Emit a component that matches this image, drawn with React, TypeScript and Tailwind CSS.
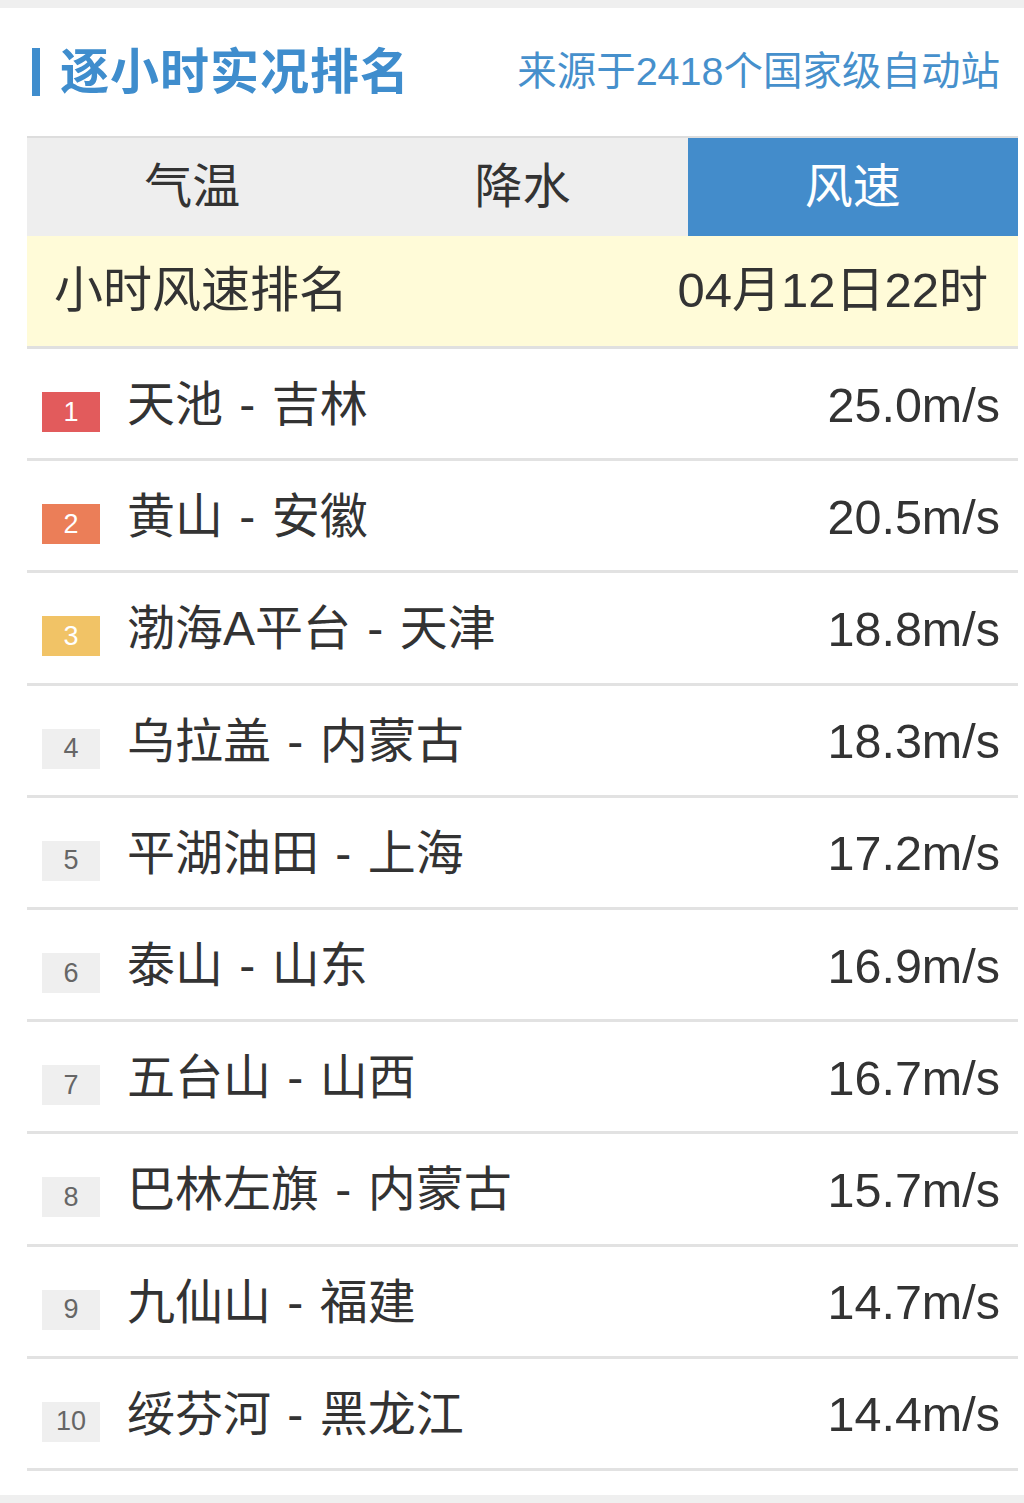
const font = { fontFamily: '"Liberation Sans", "Noto Sans CJK SC", sans-serif' };

const tabs = ['气温', '降水', '风速'];

const rows = [
  { name: '天池 - 吉林', value: '25.0m/s' },
  { name: '黄山 - 安徽', value: '20.5m/s' },
  { name: '渤海A平台 - 天津', value: '18.8m/s' },
  { name: '乌拉盖 - 内蒙古', value: '18.3m/s' },
  { name: '平湖油田 - 上海', value: '17.2m/s' },
  { name: '泰山 - 山东', value: '16.9m/s' },
  { name: '五台山 - 山西', value: '16.7m/s' },
  { name: '巴林左旗 - 内蒙古', value: '15.7m/s' },
  { name: '九仙山 - 福建', value: '14.7m/s' },
  { name: '绥芬河 - 黑龙江', value: '14.4m/s' }
];

const badgeColors = ['bg-[#e25b5c] text-white', 'bg-[#eb7e58] text-white', 'bg-[#f1c366] text-white'];

export default function App() {
  return (
    <div className="flex min-h-[1503px] w-[1024px] flex-col bg-[#efefef]" style={font}>
      <div className="mt-[8px] bg-white pb-[24px]">
        <div className="flex h-[128px] items-center justify-between pl-[32px] pr-[24px]">
          <div className="flex items-center">
            <div className="h-[48px] w-[8px] bg-[#3f8dcd]" />
            <h1 className="ml-[20px] text-[49px] font-bold leading-none tracking-[1px] text-[#3f8dcd]">逐小时实况排名</h1>
          </div>
          <p className="text-[39.5px] leading-none text-[#4690cc]">来源于2418个国家级自动站</p>
        </div>

        <div className="ml-[27px] w-[991px]">
          <div className="grid grid-cols-3 border-t-2 border-[#dddddd] bg-[#eeeeee]">
            {tabs.map((tab, i) => (
              <div
                key={tab}
                className={`flex h-[98px] items-center justify-center text-[48px] ${
                  i === 2 ? 'bg-[#438ccb] text-white' : 'text-[#333333]'
                }`}
              >
                {tab}
              </div>
            ))}
          </div>

          <div className="flex h-[113px] items-center justify-between border-b-[3px] border-[#e0e0e0] bg-[#fffbd8] pl-[27px] pr-[30px] text-[49px] text-[#333333]">
            <span>小时风速排名</span>
            <span>04月12日22时</span>
          </div>

          {rows.map((row, i) => (
            <div key={row.name} className="flex h-[112.2px] items-center border-b-[3px] border-[#e2e2e2] pr-[18px] pt-[3px]">
              <span
                className={`ml-[15px] mt-[14px] flex h-[40px] w-[58px] items-center justify-center text-[27px] leading-none ${
                  badgeColors[i] ?? 'bg-[#efefef] text-[#666666]'
                }`}
              >
                {i + 1}
              </span>
              <span className="ml-[27px] flex-1 text-[48px] text-[#333333] [word-spacing:3px]">{row.name}</span>
              <span className="text-[48.5px] text-[#333333]">{row.value}</span>
            </div>
          ))}
        </div>
      </div>
    </div>
  );
}
